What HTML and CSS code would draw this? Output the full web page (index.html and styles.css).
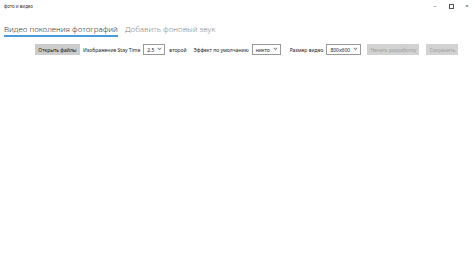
FILE: index.html
```html
<!DOCTYPE html>
<html lang="ru">
<head>
    <meta charset="UTF-8">
    <title>фото и видео</title>
    <link rel="stylesheet" href="styles.css">
</head>
<body>
    <header class="titlebar">
        <div class="app-title">фото и видео</div>
        <div class="window-buttons">
            <span class="win-btn">&#8211;</span>
            <span class="win-btn restore"></span>
            <span class="win-btn">&#215;</span>
        </div>
    </header>

    <nav class="tabs">
        <div class="tab active">Видео поколения фотографий</div>
        <div class="tab">Добавить фоновый звук</div>
    </nav>

    <section class="toolbar">
        <button class="btn btn-open">Открыть файлы</button>
        <span class="label">Изображение Stay Time</span>
        <div class="combo combo-time">2.5 <span class="chev"></span></div>
        <span class="label">второй</span>
        <span class="label">Эффект по умолчанию</span>
        <div class="combo combo-effect">никто <span class="chev"></span></div>
        <span class="label">Размер видео</span>
        <div class="combo combo-size">800x600 <span class="chev"></span></div>
        <button class="btn disabled btn-start">Начать разработку</button>
        <button class="btn disabled btn-save">Сохранить</button>
    </section>
</body>
</html>
```

FILE: styles.css
```css
* {
    margin: 0;
    padding: 0;
    box-sizing: border-box;
    font-family: 'Noto Sans', 'Open Sans', sans-serif;
}

body {
    background-color: #ffffff;
    color: #000;
    width: 475px;
    height: 253px;
    overflow: hidden;
}

.titlebar {
    display: flex;
    justify-content: space-between;
    align-items: center;
    height: 12px;
    padding-left: 4px;
}

.app-title {
    font-size: 4.5px;
    color: #333;
}

.window-buttons {
    display: flex;
    align-items: center;
}

.win-btn {
    width: 16px;
    text-align: center;
    font-size: 6px;
    color: #444;
}

.restore {
    position: relative;
    height: 6px;
}

.restore::before {
    content: '';
    position: absolute;
    left: 6px;
    top: 1px;
    width: 3px;
    height: 3px;
    border: 1px solid #555;
}

.tabs {
    display: flex;
    gap: 7px;
    padding-left: 4px;
    margin-top: 10px;
}

.tab {
    font-size: 8px;
    font-weight: 300;
    color: #8a8a8a;
    line-height: 13px;
    white-space: nowrap;
}

.tab.active {
    color: #333;
    border-bottom: 2px solid #4a9ad8;
}

.toolbar {
    display: flex;
    align-items: center;
    padding-left: 35px;
    margin-top: 7px;
    font-size: 5px;
    white-space: nowrap;
}

.btn {
    height: 11px;
    background-color: #cccccc;
    border: none;
    font-size: 5px;
    color: #111;
    text-align: center;
    white-space: nowrap;
}

.btn-open {
    width: 45px;
}

.btn.disabled {
    color: #a0a0a0;
    background-color: #d2d2d2;
}

.btn-start {
    width: 52px;
    margin-left: 6px;
}

.btn-save {
    width: 32px;
    margin-left: 7px;
}

.label {
    color: #222;
    margin-left: 3px;
}

.combo {
    display: flex;
    align-items: center;
    justify-content: space-between;
    height: 11px;
    border: 1px solid #999;
    padding: 0 3px;
    margin-left: 3px;
    color: #222;
}

.combo-time {
    width: 22px;
    margin-right: 1px;
}

.combo-effect {
    width: 29px;
    margin-right: 6px;
}

.combo-size {
    width: 35px;
}

.chev {
    width: 3px;
    height: 3px;
    border-right: 0.6px solid #888;
    border-bottom: 0.6px solid #888;
    transform: rotate(45deg) translate(-1px, -1px);
}

.label + .label {
    margin-left: 7px;
}
```
